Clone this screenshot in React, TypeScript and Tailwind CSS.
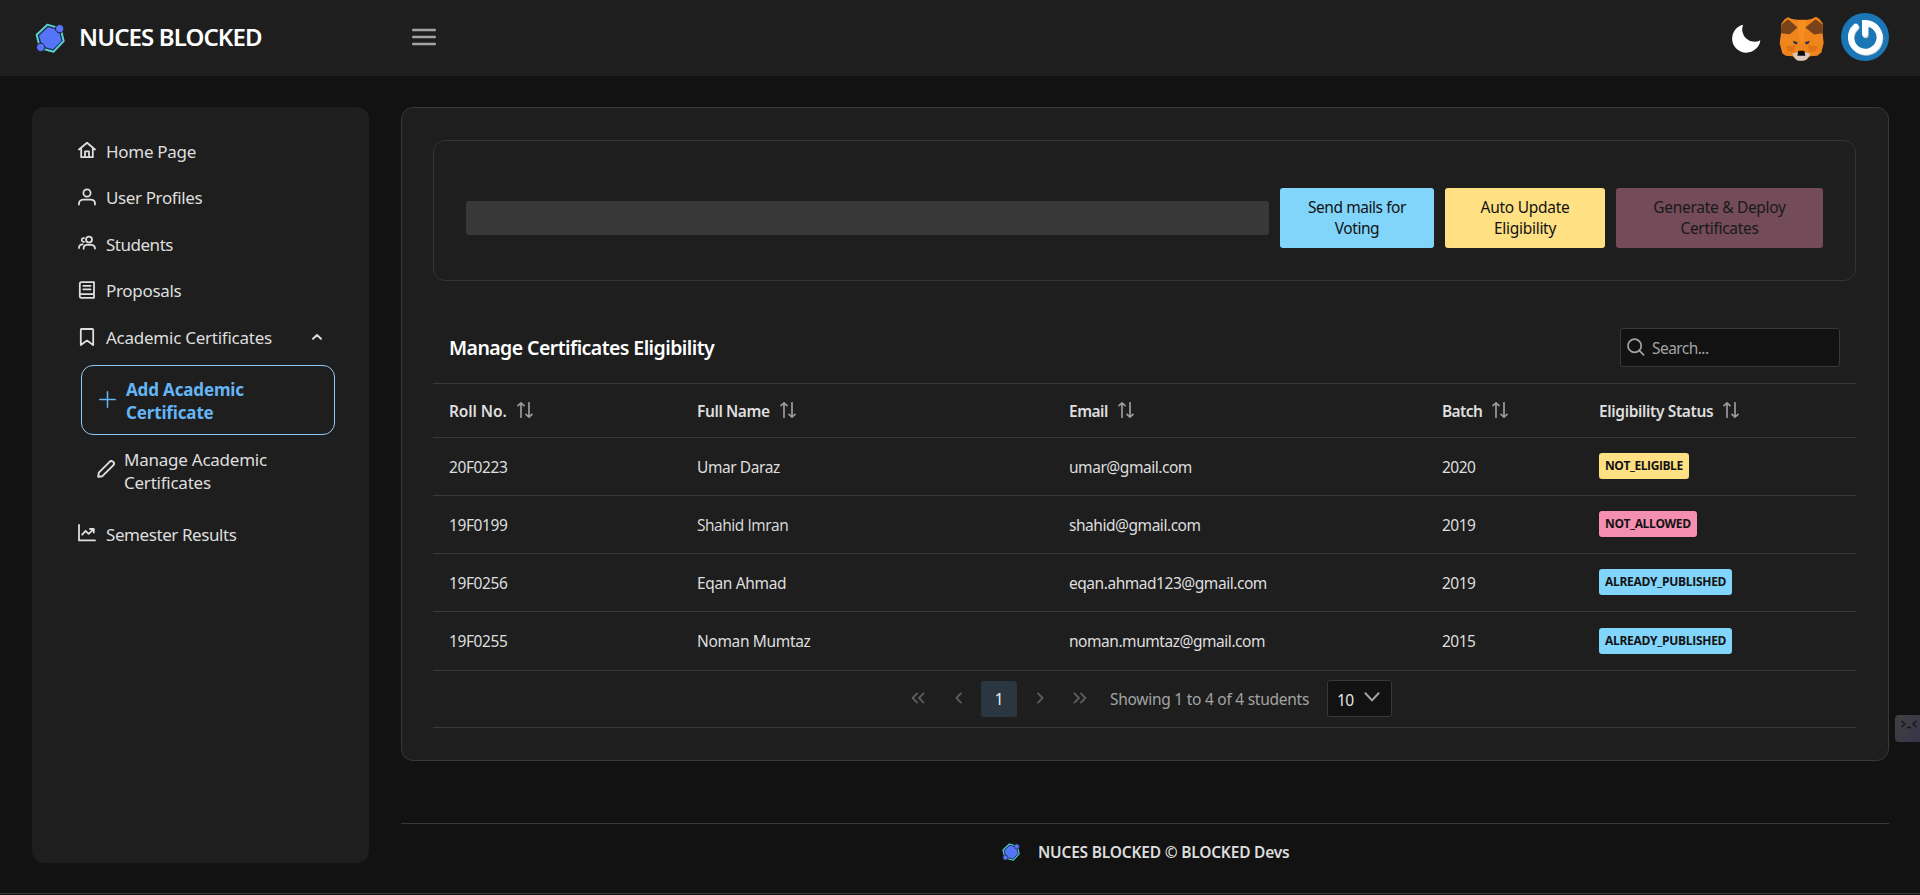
import type { ReactNode } from "react";

type IconProps = { children: ReactNode; className?: string; width?: number };

function Icon({ children, className = "size-[18px]", width = 1.9 }: IconProps) {
  return (
    <svg viewBox="0 0 18 18" className={`shrink-0 ${className}`} fill="none" stroke="currentColor" strokeWidth={width} strokeLinecap="round" strokeLinejoin="round">
      {children}
    </svg>
  );
}

function Logo({ className }: { className: string }) {
  return (
    <svg viewBox="106 67 90 90" className={className}>
      <path d="M143 72 183 84 192 121 162 153 121 142 111 102Z" fill="none" stroke="#56d3d0" strokeWidth="6" strokeLinejoin="round" />
      <path d="M145 78 178 88 187 121 160 147 127 138 117 105Z" fill="#5674f8" stroke="#1c2440" strokeWidth="2" strokeLinejoin="round" />
      <circle cx="180" cy="84" r="12.5" fill="#5674f8" stroke="#1e1e2a" strokeWidth="3" />
      <circle cx="123" cy="140" r="12.5" fill="#5674f8" stroke="#1e1e2a" strokeWidth="3" />
    </svg>
  );
}

function Fox() {
  return (
    <svg viewBox="235 47 135 134" className="h-[45px] w-[45px]">
      <path d="M262 50Q275 58 290 58H320Q334 57 346 49L357 56 367 70 366 100 369 128 362 156 350 166 328 167 315 179H288L276 167 255 166 245 158 237 128 241 100 242 70 252 56Z" fill="#f0851b" />
      <path d="M262 56 291 81 267 101 240 98 243 72ZM345 56 314 81 340 102 367 98 366 72Z" fill="#7a4219" />
      <path d="M290 59H317L314 82 306 128H300L291 82Z" fill="#f88d20" />
      <path d="M255 138 284 133 280 154 262 152ZM351 138 321 133 325 154 344 152Z" fill="#df7417" />
      <path d="M274 160 290 156H315L330 160 318 176 308 181H294L286 176Z" fill="#d9cbc2" />
      <path d="M277 121 291 125 288 132 280 129ZM327 121 313 125 316 132 324 129Z" fill="#233447" />
      <path d="M293 151H311L314 166H290Z" fill="#0d0d0d" />
    </svg>
  );
}

function PowerAvatar() {
  return (
    <svg viewBox="0 0 144 144" className="size-[48px]">
      <circle cx="72" cy="72" r="72" fill="#1b76b6" />
      <g fill="none" strokeLinecap="round" strokeWidth="18">
        <path d="M72 64V30A43 43 0 1 1 44 41" stroke="#c5cfd8" transform="translate(2 3)" />
        <path d="M72 62V30A43 43 0 1 1 44 41" stroke="#ffffff" />
      </g>
    </svg>
  );
}

function SortIcon() {
  return (
    <svg viewBox="0 0 16 16" className="mb-[4px] size-[16px] shrink-0 text-[#9b9b9f]" fill="none" stroke="currentColor" strokeWidth="1.7" strokeLinecap="round" strokeLinejoin="round">
      <path d="M4 15.3V.9M1 3.6 4 .9 7 3.6M12 .7V15M9 12.4 12 15.1 15 12.4" />
    </svg>
  );
}

const menu = [
  { label: "Home Page", track: "tracking-[-0.3px]", icon: <path d="M1 8.5 9 1.8 17 8.5M3.2 7V16.2H14.8V7M7 16V10.3H11V16" /> },
  { label: "User Profiles", track: "tracking-[-0.38px]", icon: <><circle cx="9" cy="5" r="3.6" /><path d="M1 16.6V15.6C1 13 3 11.7 5.5 11.7H12.5C15 11.7 17 13 17 15.6V16.6" /></> },
  { label: "Students", track: "tracking-[-0.48px]", icon: <><circle cx="11" cy="5.6" r="3" /><path d="M5.6 14.8C5.6 12 7 10.8 9 10.8H13C15.6 10.8 17 12 17 14.6M6 4.2C4.2 4 3.6 5.2 3.8 6.3 4 7.5 5 8 6 7.8M1 14C1 11.7 2.2 10.4 4.6 10.4" /></> },
  { label: "Proposals", track: "tracking-[-0.32px]", icon: <path d="M3.3 1.2H16V16.8H3.3C2.3 16.8 1.8 16 1.8 15.3V2.7C1.8 1.8 2.4 1.2 3.3 1.2ZM2 13.2H15.8M5.3 4.8H12.6M5.3 8.3H12.6" /> },
  { label: "Academic Certificates", track: "tracking-[-0.25px]", icon: <path d="M3.3 1H14.2C14.9 1 15.2 1.5 15.2 2V17L9 12.6 2.8 17V2C2.8 1.4 3 1 3.3 1Z" /> },
];

const columns = [
  { label: "Roll No.", track: "tracking-[-0.1px]" },
  { label: "Full Name", track: "tracking-[-0.41px]" },
  { label: "Email", track: "tracking-[-0.5px]" },
  { label: "Batch", track: "tracking-[-0.59px]" },
  { label: "Eligibility Status", track: "tracking-[-0.37px]" },
];

const yellow = "bg-[#ffe082] tracking-[-0.43px]";
const pink = "bg-[#f48fb1] tracking-[-0.37px]";
const blue = "bg-[#81d4fa] tracking-[-0.29px]";

const rows = [
  { roll: "20F0223", name: "Umar Daraz", nameStyle: "tracking-[-0.42px]", email: "umar@gmail.com", batch: "2020", status: "NOT_ELIGIBLE", tag: yellow, height: "h-[58px]" },
  { roll: "19F0199", name: "Shahid Imran", nameStyle: "font-['Open_Sans','Noto_Sans',sans-serif] tracking-[-0.45px]", email: "shahid@gmail.com", batch: "2019", status: "NOT_ALLOWED", tag: pink, height: "h-[58px]" },
  { roll: "19F0256", name: "Eqan Ahmad", nameStyle: "tracking-[-0.35px]", email: "eqan.ahmad123@gmail.com", batch: "2019", status: "ALREADY_PUBLISHED", tag: blue, height: "h-[58px]" },
  { roll: "19F0255", name: "Noman Mumtaz", nameStyle: "tracking-[-0.35px]", email: "noman.mumtaz@gmail.com", batch: "2015", status: "ALREADY_PUBLISHED", tag: blue, height: "h-[59px]" },
];

const grid = "grid grid-cols-[248px_372px_373px_157px_1fr] items-center border-b border-[#383838]";

function Header() {
  return (
    <header className="flex h-[76px] shrink-0 items-center bg-[#1e1e1e] pl-[35px] pr-[31px]">
      <Logo className="mb-px size-[30px]" />
      <h1 className="ml-[14px] w-[333px] pb-[3px] text-[24px] font-semibold tracking-[-0.89px] text-white">NUCES BLOCKED</h1>
      <svg viewBox="0 0 24 18" className="mb-[3px] h-[18px] w-[24px] text-[#a3a3a3]" fill="none" stroke="currentColor" strokeWidth="2.5" strokeLinecap="round">
        <path d="M1.2 2H22.8M1.2 9H22.8M1.2 16H22.8" />
      </svg>
      <div className="ml-auto flex items-center">
        <svg viewBox="94 70 88 88" className="mr-[18px] size-[29px]">
          <path d="M128 72A43 43 0 1 0 180 119A37 37 0 0 1 128 72Z" fill="#fff" />
        </svg>
        <Fox />
        <div className="ml-[17px] pb-[3px]"><PowerAvatar /></div>
      </div>
    </header>
  );
}

function Sidebar() {
  return (
    <nav className="h-[756px] w-[337px] shrink-0 rounded-[12px] bg-[#1e1e1e] pt-[21px] text-[17px] text-[#dedede]">
      {menu.map((m, i) => (
        <div key={m.label} className="flex h-[46.6px] items-center pl-[46px]">
          <div className="mb-[2px]"><Icon width={1.8}>{m.icon}</Icon></div>
          <span className={`ml-[10px] whitespace-nowrap ${m.track}`}>{m.label}</span>
          {i === 4 && <Icon className="ml-[36px] mb-[2px] size-[18px]"><path d="M5 10.8 9 7 13 10.8" /></Icon>}
        </div>
      ))}
      <div className="ml-[49px] mt-[4px] flex h-[70px] w-[254px] items-center rounded-[12px] border border-[#90caf9] pl-[17px] font-bold leading-[23px] text-[#64b5f6]">
        <Icon className="size-[17px]" width={1.6}><path d="M9 .8V17.2M.8 9H17.2" /></Icon>
        <span className="ml-[10px] pt-[3px] tracking-[-0.15px]">Add Academic<br />Certificate</span>
      </div>
      <div className="mt-[2px] flex h-[70px] items-center pl-[65px] leading-[23px]">
        <div className="mb-[5px]"><Icon><path d="M1.2 16.8 1.8 12.6 12.6 1.8C13.6.9 15.3.9 16.3 1.9 17.2 2.9 17.1 4.5 16.2 5.4L5.4 16.2Z" /></Icon></div>
        <span className="ml-[9px] pb-px tracking-[-0.24px]">Manage Academic<br />Certificates</span>
      </div>
      <div className="mt-[4px] flex h-[46.6px] items-center pl-[46px]">
        <div className="mb-[3px]"><Icon width={1.8}><path d="M1 1V16.4H17M4.2 10.6 7.6 6.8 10.6 9.8 15.4 5.4M12 5H15.8V8.6" /></Icon></div>
        <span className="ml-[10px] tracking-[-0.42px]">Semester Results</span>
      </div>
    </nav>
  );
}

function Actions() {
  const base = "ml-[11px] flex h-[60px] items-center justify-center rounded-[3px] text-center leading-[21px] text-[#121212]";
  return (
    <section className="flex h-[141px] items-center rounded-[12px] border border-[#343434] px-[32px] pt-[15px]">
      <div className="h-[34px] w-[803px] rounded-[3px] bg-[#383838]" />
      <button className={`${base} w-[154px] bg-[#81d4fa] tracking-[-0.44px]`}>Send mails for<br />Voting</button>
      <button className={`${base} w-[160px] bg-[#ffe082] tracking-[-0.27px]`}>Auto Update<br />Eligibility</button>
      <button disabled className={`${base} w-[207px] bg-[#f48fb1] tracking-[-0.3px] opacity-40`}>Generate &amp; Deploy<br />Certificates</button>
    </section>
  );
}

function Paginator() {
  const btn = "mr-[4.6px] flex size-[36px] items-center justify-center rounded-[3px] text-[#5c5c5c]";
  return (
    <div className="flex h-[57px] items-center border-b border-[#383838] pl-[467px]">
      <span className={btn}><Icon className="mb-[2px] size-[18px]"><path d="M8.2 4.4 3.6 9 8.2 13.6M14.6 4.4 10 9 14.6 13.6" /></Icon></span>
      <span className={btn}><Icon className="mb-[2px] size-[18px]"><path d="M11 4.4 6.4 9 11 13.6" /></Icon></span>
      <span className="mr-[4.6px] flex size-[36px] items-center justify-center rounded-[3px] bg-[#2a3640] pt-px text-[#e6f2fc]">1</span>
      <span className={btn}><Icon className="mb-[2px] size-[18px]"><path d="M7 4.4 11.6 9 7 13.6" /></Icon></span>
      <span className={btn}><Icon className="mb-[2px] size-[18px]"><path d="M3.4 4.4 8 9 3.4 13.6M9.8 4.4 14.4 9 9.8 13.6" /></Icon></span>
      <span className="ml-[7px] w-[217px] whitespace-nowrap pt-[2px] tracking-[-0.26px] text-[#a3a3a3]">Showing 1 to 4 of 4 students</span>
      <div className="mb-px flex h-[37px] w-[65px] items-center rounded-[3px] border border-[#383838] bg-[#121212] pl-[9px] text-[#e6e6e6]">
        <span className="pt-[5px] tracking-[-0.6px]">10</span>
        <Icon className="mb-[3px] ml-[9px] size-[18px] text-[#a3a3a3]" width={2}><path d="M2.4 5.2 9 12.4 15.6 5.2" /></Icon>
      </div>
    </div>
  );
}

function StudentsTable() {
  return (
    <section className="mt-[32px]">
      <div className="flex h-[71px] items-center justify-between border-b border-[#383838] px-[16px]">
        <h2 className="text-[19.5px] font-semibold tracking-[-0.57px] text-white">Manage Certificates Eligibility</h2>
        <div className="mb-px flex h-[39px] w-[220px] items-center rounded-[3px] border border-[#383838] bg-[#121212] pl-[6px] text-[#a3a3a3]">
          <Icon className="mb-[2px] size-[18px]" width={1.7}><circle cx="7.6" cy="7.8" r="6.6" /><path d="M12.4 12.6 16.6 16.8" /></Icon>
          <span className="ml-[7px] pt-[2px] tracking-[-0.55px]">Search...</span>
        </div>
      </div>
      <div className={`${grid} h-[54px] font-semibold`}>
        {columns.map((c) => (
          <div key={c.label} className="flex items-center gap-[10px] pl-[16px] pt-[2px]">
            <span className={c.track}>{c.label}</span>
            <SortIcon />
          </div>
        ))}
      </div>
      {rows.map((r) => (
        <div key={r.roll} className={`${grid} ${r.height}`}>
          <span className="pl-[16px] pt-[2px] tracking-[-0.4px]">{r.roll}</span>
          <span className={`pl-[16px] pt-[2px] ${r.nameStyle}`}>{r.name}</span>
          <span className="pl-[16px] pt-[2px] tracking-[-0.46px]">{r.email}</span>
          <span className="pl-[16px] pt-[2px] tracking-[-0.53px]">{r.batch}</span>
          <div className="flex pb-px pl-[16px]">
            <span className={`flex h-[26px] items-center rounded-[3px] px-[6px] font-['Open_Sans','Noto_Sans',sans-serif] text-[12px] font-bold text-[#121212] ${r.tag}`}>{r.status}</span>
          </div>
        </div>
      ))}
      <Paginator />
    </section>
  );
}

export default function App() {
  return (
    <div className="relative flex h-[895px] w-[1920px] flex-col overflow-hidden bg-[#121212] font-['Noto_Sans','Open_Sans',sans-serif] text-[15.5px] text-[#dedede]">
      <Header />
      <div className="flex h-[818px] shrink-0 border-b border-[#383838] pl-[32px] pt-[31px]">
        <Sidebar />
        <div className="ml-[32px] w-[1488px]">
          <main className="h-[654px] rounded-[12px] border border-[#383838] bg-[#1e1e1e] pl-[31px] pr-[32px] pt-[32px]">
            <Actions />
            <StudentsTable />
          </main>
          <footer className="mt-[62px] flex h-[58px] items-center border-t border-[#383838] pl-[601px]">
            <Logo className="mb-px size-[18px]" />
            <span className="ml-[18px] pt-px font-semibold tracking-[-0.2px]">NUCES BLOCKED © BLOCKED Devs</span>
          </footer>
        </div>
      </div>
      <div className="absolute right-0 top-[715px] flex h-[27px] w-[25px] justify-center rounded-l-[4px] bg-linear-to-br from-[#404040] to-[#37354a] pl-[2px] pt-[5px]">
        <svg viewBox="0 0 18 9" className="h-[9px] w-[18px]" fill="none" stroke="#17171a" strokeWidth="1.5">
          <path d="M1.5 1 5 4 1.5 7M16.5 1 13 4 16.5 7M7 7.5H11" />
        </svg>
      </div>
    </div>
  );
}
